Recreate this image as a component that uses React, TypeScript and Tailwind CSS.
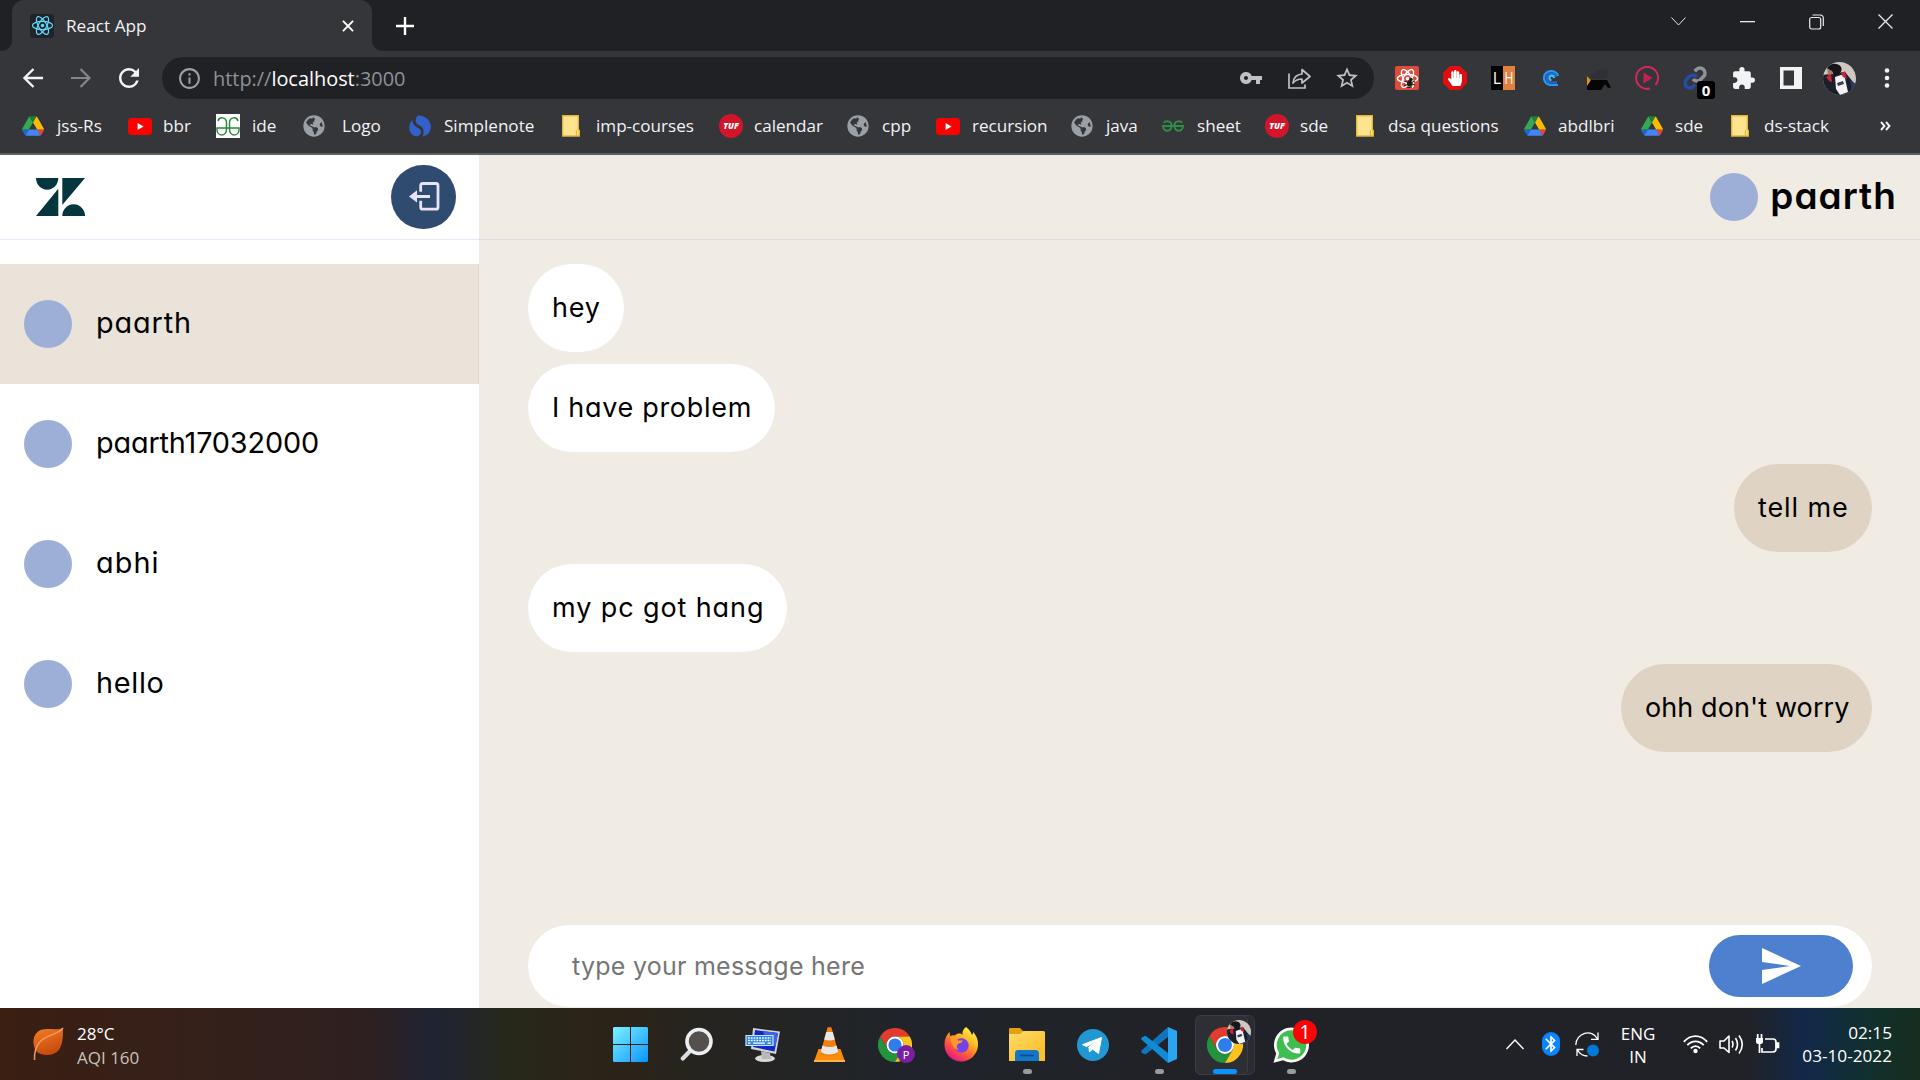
import React from 'react';
import {
  MdVpnKey,
  MdStarBorder,
  MdExtension,
  MdInfoOutline,
  MdRefresh,
  MdBluetooth,
} from 'react-icons/md';
import { FaGlobeAmericas, FaHandPaper } from 'react-icons/fa';

/* ---------- shared glyphs ---------- */

function Atom({ size, color, width = 1.3 }: { size: number; color: string; width?: number }) {
  return (
    <svg width={size} height={size} viewBox="0 0 24 24" fill="none" stroke={color} strokeWidth={width}>
      <ellipse cx="12" cy="12" rx="10.5" ry="4.2" />
      <ellipse cx="12" cy="12" rx="10.5" ry="4.2" transform="rotate(60 12 12)" />
      <ellipse cx="12" cy="12" rx="10.5" ry="4.2" transform="rotate(120 12 12)" />
      <circle cx="12" cy="12" r="1.8" fill={color} stroke="none" />
    </svg>
  );
}

function DriveIcon() {
  return (
    <svg width="22" height="20" viewBox="0 0 87.3 78">
      <path d="m6.6 66.85 3.85 6.65c.8 1.4 1.95 2.5 3.3 3.3l13.75-23.8h-27.5c0 1.55.4 3.1 1.2 4.5z" fill="#1967d2" />
      <path d="m43.65 25-13.75-23.8c-1.35.8-2.5 1.9-3.3 3.3l-25.4 44a9.06 9.06 0 0 0 -1.2 4.5h27.5z" fill="#34a853" />
      <path d="m73.55 76.8c1.35-.8 2.5-1.9 3.3-3.3l1.6-2.75 7.65-13.25c.8-1.4 1.2-2.95 1.2-4.5h-27.5l5.85 11.5z" fill="#ea4335" />
      <path d="m43.65 25 13.75-23.8c-1.35-.8-2.9-1.2-4.5-1.2h-18.5c-1.6 0-3.15.45-4.5 1.2z" fill="#188038" />
      <path d="m59.8 53h-32.3l-13.75 23.8c1.35.8 2.9 1.2 4.5 1.2h50.8c1.6 0 3.15-.45 4.5-1.2z" fill="#4285f4" />
      <path d="m73.4 26.5-12.7-22c-.8-1.4-1.95-2.5-3.3-3.3l-13.75 23.8 16.15 28h27.45c0-1.55-.4-3.1-1.2-4.5z" fill="#fbbc04" />
    </svg>
  );
}

function YoutubeIcon() {
  return (
    <svg width="24" height="17" viewBox="0 0 24 17">
      <rect width="24" height="17" rx="4" fill="#f00" />
      <path d="M9.6 5v7l6-3.5z" fill="#fff" />
    </svg>
  );
}

function GfgMark({ color, width }: { color: string; width: number }) {
  return (
    <svg width="24" height="24" viewBox="0 0 24 24" fill="none" stroke={color} strokeWidth={width}>
      <path d="M2 7C3 2.500 10.500 2.500 10.500 9v6c0 3.500-2 6-5 6s-4.500-3-4.500-5.500V14H23v1.500c0 2.500-1.500 5.500-4.500 5.500s-5-2.500-5-6V9C13.500 2.500 21 2.500 22 7" />
    </svg>
  );
}

function SmallGfg() {
  return (
    <svg width="22" height="12" viewBox="0 0 22 12" fill="none" stroke="#2f8d46" strokeWidth="1.9">
      <path d="M2 3C3 .500 9.500.500 9.500 5 9.500 13 1 12 1 6h20c0 6-8.500 7-8.500-1C12.500.500 19 .500 20 3" />
    </svg>
  );
}

function SimplenoteIcon() {
  return (
    <svg width="22" height="22" viewBox="0 0 22 22" fill="#3361cc">
      <path d="M9 .500C5.500 4 6 8.500 10 10 14.500 12 16 16 13.500 21.500 20.500 20.500 23.500 13 21 8 19 3 14.500.500 9 .500Z" />
      <path d="M3.500 5C-1 9.500-1 17 4.500 20.500 8.500 22.500 12 20 12 17 12 11.500 3 13 3.500 5Z" />
    </svg>
  );
}

function FolderMark() {
  return (
    <svg width="18" height="22" viewBox="0 0 18 22">
      <path d="M.7.700h15.600V14.500l1 1V21H.700Z" fill="#ffe38f" stroke="#e3b73c" strokeWidth="1.400" />
      <path d="M14.500 21v-6" stroke="#e3b73c" strokeWidth="1.300" />
    </svg>
  );
}

function TufIcon() {
  return (
    <span className="flex h-6 w-6 items-center justify-center rounded-full bg-[#d3152c] text-[8.5px] font-extrabold italic leading-none text-white">
      TUF
    </span>
  );
}

const Globe = () => <FaGlobeAmericas size={22} color="#9aa0a6" />;

function ChromeIcon({ size }: { size: number }) {
  return (
    <svg width={size} height={size} viewBox="0 0 48 48">
      <path d="M24 12H44.800A24 24 0 0 0 3.200 12L13.600 30A12 12 0 0 1 24 12Z" fill="#e33b2e" />
      <path d="M3.200 12A24 24 0 0 0 24 48L34.400 30A12 12 0 0 1 13.600 30Z" fill="#23933f" />
      <path d="M44.800 12A24 24 0 0 1 24 48L34.400 30A12 12 0 0 0 24 12Z" fill="#fcc31e" />
      <circle cx="24" cy="24" r="12" fill="#fff" />
      <circle cx="24" cy="24" r="9.300" fill="#2f7ded" />
    </svg>
  );
}

function Avatar({ size, id }: { size: number; id: string }) {
  return (
    <svg width={size} height={size} viewBox="0 0 33 33">
      <clipPath id={id}>
        <circle cx="16.500" cy="16.500" r="16.500" />
      </clipPath>
      <g clipPath={`url(#${id})`}>
        <path d="M0 0h33v33H0z" fill="#cfc8c0" />
        <path d="M0 13 6 12 13 11 22 10 30 20 33 26V33H0Z" fill="#1b1f2b" />
        <path d="M12 15 21 12 25 30 17 33 13 27Z" fill="#f2f2f4" />
        <path d="M3 15 8 12 9 20 6 19Z" fill="#c8243c" />
        <path d="M18 12 22 9 24 17 20 15Z" fill="#c8243c" />
        <path d="M14 21 20 19 21 22 15 24Z" fill="#3a3f4e" />
        <path d="M27 18 33 22V33H29Z" fill="#253a63" />
        <path d="M4 6 10 7 10 12 5 13Z" fill="#a9795d" />
        <path d="M4 6C6 1 15 0 18 5 20 8 17 13 12 14L9 9Z" fill="#15151a" />
      </g>
    </svg>
  );
}

/* ---------- browser chrome ---------- */

function TabStrip() {
  return (
    <div className="flex h-[51px] bg-[#202124]">
      <div className="flex w-3 flex-col justify-end bg-[#35363a]">
        <div className="h-full rounded-br-[10px] bg-[#202124]" />
      </div>
      <div className="bg-[#202124]">
        <div className="flex h-[51px] w-[360px] items-center rounded-t-[12px] bg-[#35363a] pl-[18px] pr-[18px]">
          <span className="flex h-6 w-6 items-center justify-center rounded-[3px] bg-[#20232a]">
            <Atom size={23} color="#61dafb" />
          </span>
          <span className="ml-3 flex-1 text-[17.2px] leading-6 text-[#f1f3f4]">React App</span>
          <svg width="12" height="12" viewBox="0 0 13 13" stroke="#fff" strokeWidth="2.1">
            <path d="M1 1 12 12M12 1 1 12" />
          </svg>
        </div>
      </div>
      <div className="w-3 bg-[#35363a]">
        <div className="h-full rounded-bl-[10px] bg-[#202124]" />
      </div>
      <svg className="ml-3 mt-[17px]" width="18" height="18" viewBox="0 0 18 18" stroke="#fff" strokeWidth="2.400">
        <path d="M9 0V18M0 9H18" />
      </svg>
      <div className="flex flex-1 items-center justify-end gap-[54px] pb-[8px] pr-[27px]">
        <svg width="15" height="9" viewBox="0 0 15 9" fill="none" stroke="#e8eaed" strokeWidth="1">
          <path d="M.500.500 7.500 8 14.500.500" />
        </svg>
        <svg width="15" height="2" viewBox="0 0 15 2">
          <path d="M0 0h15v1.300H0z" fill="#e8eaed" />
        </svg>
        <svg width="15" height="16" viewBox="0 0 15 16" fill="none" stroke="#e8eaed" strokeWidth="1.200">
          <rect x=".700" y="3.500" width="11" height="11.500" rx="2" />
          <path d="M3.500 1H11Q14.300 1 14.300 4.300V12" />
        </svg>
        <svg width="15" height="15" viewBox="0 0 15 15" stroke="#e8eaed" strokeWidth="1.300">
          <path d="M.500.500 14.500 14.500M14.500.500.500 14.500" />
        </svg>
      </div>
    </div>
  );
}

function Cell({ children }: { children: React.ReactNode }) {
  return <div className="flex h-[42px] w-12 shrink-0 items-center justify-center">{children}</div>;
}

function LinkExtension() {
  return (
    <div className="relative">
      <svg width="24" height="24" viewBox="0 0 24 24" fill="none" strokeWidth="3.600">
        <path stroke="#8f9296" d="M10 13a5 5 0 0 0 7.540.540l3-3a5 5 0 0 0-7.070-7.070l-1.720 1.710" />
        <path stroke="#274ba6" d="M14 11a5 5 0 0 0-7.540-.540l-3 3a5 5 0 0 0 7.070 7.070l1.710-1.710" />
      </svg>
      <span className="absolute -bottom-[9px] -right-[8px] flex h-[18px] w-[18px] items-center justify-center rounded-[3px] bg-black text-[15px] font-bold leading-none text-white">
        0
      </span>
    </div>
  );
}

function Toolbar() {
  return (
    <div className="flex h-[54px] items-center bg-[#35363a] pl-[9px] pr-[9px]">
      <Cell>
        <svg width="20" height="20" viewBox="0 0 20 20" fill="none" stroke="#f1f3f4" strokeWidth="2.300">
          <path d="M20 10H1.500M10.500 1 1.500 10l9 9" />
        </svg>
      </Cell>
      <Cell>
        <svg width="20" height="20" viewBox="0 0 20 20" fill="none" stroke="#85868a" strokeWidth="2.200">
          <path d="M0 10H18.500M9.500 1l9 9-9 9" />
        </svg>
      </Cell>
      <Cell>
        <MdRefresh size={30} color="#f1f3f4" />
      </Cell>
      <div className="ml-[9px] mr-[9px] flex h-[42px] flex-1 items-center rounded-full bg-[#202124] pl-[15px] pr-[3px]">
        <MdInfoOutline size={25} color="#9aa0a6" />
        <span className="ml-[11px] mt-px flex-1 text-[19.9px] leading-6 text-[#8d9196]">
          http://<span className="text-white">localhost</span>:3000
        </span>
        <Cell>
          <MdVpnKey size={24} color="#bdc1c6" />
        </Cell>
        <Cell>
          <svg width="23" height="21" viewBox="0 0 23 21" fill="none" stroke="#bdc1c6" strokeWidth="1.700">
            <path d="M1 5.500V20H17V16.500" />
            <path d="M5 15C5.500 9.500 8.500 6.500 14 6V1.500L22 8.500 14 15V11C10 11 7.500 12 5 15Z" strokeLinejoin="round" />
          </svg>
        </Cell>
        <Cell>
          <MdStarBorder size={26} color="#bdc1c6" />
        </Cell>
      </div>
      <Cell>
        <span className="relative flex h-6 w-6 items-center justify-center rounded-[2px] bg-[#dd4b39]">
          <Atom size={23} color="#fff" width={1.5} />
          <svg className="absolute bottom-[2px] right-[4px]" width="11" height="12" viewBox="0 0 11 12">
            <ellipse cx="5.500" cy="7.500" rx="2.400" ry="3.300" fill="#1b1b1b" />
            <circle cx="7" cy="3.500" r="1.700" fill="#1b1b1b" />
            <path d="M0 5 11 9M0 10 11 5M3 12 8 11" stroke="#1b1b1b" strokeWidth="1.100" />
          </svg>
        </span>
      </Cell>
      <Cell>
        <span className="relative flex h-6 w-6 items-center justify-center">
          <svg className="absolute inset-0" width="24" height="24" viewBox="0 0 24 24">
            <path d="M7 0H17L24 7V17L17 24H7L0 17V7Z" fill="#e40d0d" />
          </svg>
          <FaHandPaper className="relative" size={16} color="#fff" />
        </span>
      </Cell>
      <Cell>
        <span className="flex h-6 w-6 text-[16px] leading-6 text-white">
          <span className="w-3 bg-black text-center">L</span>
          <span className="w-3 bg-[#e0813f] text-center">
            <span className="inline-block origin-center scale-x-75">H</span>
          </span>
        </span>
      </Cell>
      <Cell>
        <svg width="16" height="16" viewBox="0 0 16 16" fill="none" strokeWidth="2.2">
          <path d="M15 6C13.500-1 1-.500 1 8c0 4.500 3.500 7 7 7h7" stroke="#1f9df2" />
          <path d="M13 7C11.500 1.500 3.700 2.500 3.700 8c0 3 2.300 4.500 4.300 4.500h6" stroke="#2a62e8" />
          <path d="M11 8C10.500 4.500 6.400 5 6.400 8c0 1.500 1 2 2 2" stroke="#35c5e8" />
        </svg>
      </Cell>
      <Cell>
        <svg width="24" height="24" viewBox="0 0 24 24">
          <path d="M0 10 4 14.500 0 21Z" fill="#f08a1c" />
          <path d="M3 10 10 5 20 3 22 8 18 13H5Z" fill="#303033" />
          <path d="M4 14 20 14 24 21.500 21 22 18 18 14 24H0V20Z" fill="#050505" />
        </svg>
      </Cell>
      <Cell>
        <svg width="24" height="24" viewBox="0 0 24 24">
          <path d="M15 22.500A11 11 0 1 1 20.500 19" fill="none" stroke="#d92560" strokeWidth="1.900" />
          <path d="M8.500 6.500v11L17.500 12Z" fill="#c2224f" />
        </svg>
      </Cell>
      <Cell>
        <LinkExtension />
      </Cell>
      <Cell>
        <MdExtension size={25} color="#f1f3f4" />
      </Cell>
      <Cell>
        <svg width="22" height="22" viewBox="0 0 22 22">
          <path d="M0 0H22V22H0ZM3.500 3.500V18.500H14V3.500Z" fill="#f1f3f4" fillRule="evenodd" />
        </svg>
      </Cell>
      <Cell>
        <Avatar size={33} id="profile" />
      </Cell>
      <Cell>
        <svg width="6" height="20" viewBox="0 0 6 20" fill="#f1f3f4">
          <circle cx="3" cy="2.500" r="2.300" />
          <circle cx="3" cy="10" r="2.300" />
          <circle cx="3" cy="17.500" r="2.300" />
        </svg>
      </Cell>
    </div>
  );
}

const bookmarks: { icon: React.ReactNode; label: string; item: string; box: string }[] = [
  { icon: <DriveIcon />, label: 'jss-Rs', item: 'w-[106px]', box: 'w-[35px]' },
  { icon: <YoutubeIcon />, label: 'bbr', item: 'w-[88px]', box: 'w-[35px]' },
  {
    icon: (
      <span className="h-6 w-6 bg-white">
        <GfgMark color="#2a8a3c" width={1.5} />
      </span>
    ),
    label: 'ide',
    item: 'w-[87px]',
    box: 'w-[36px]',
  },
  { icon: <Globe />, label: 'Logo', item: 'w-[106px]', box: 'w-[39px]' },
  { icon: <SimplenoteIcon />, label: 'Simplenote', item: 'w-[153px]', box: 'w-[35px]' },
  { icon: <FolderMark />, label: 'imp-courses', item: 'w-[157px]', box: 'w-[34px]' },
  { icon: <TufIcon />, label: 'calendar', item: 'w-[128px]', box: 'w-[35px]' },
  { icon: <Globe />, label: 'cpp', item: 'w-[89px]', box: 'w-[35px]' },
  { icon: <YoutubeIcon />, label: 'recursion', item: 'w-[135px]', box: 'w-[36px]' },
  { icon: <Globe />, label: 'java', item: 'w-[91px]', box: 'w-[35px]' },
  { icon: <SmallGfg />, label: 'sheet', item: 'w-[103px]', box: 'w-[35px]' },
  { icon: <TufIcon />, label: 'sde', item: 'w-[91px]', box: 'w-[35px]' },
  { icon: <FolderMark />, label: 'dsa questions', item: 'w-[168px]', box: 'w-[32px]' },
  { icon: <DriveIcon />, label: 'abdlbri', item: 'w-[117px]', box: 'w-[34px]' },
  { icon: <DriveIcon />, label: 'sde', item: 'w-[90px]', box: 'w-[34px]' },
  { icon: <FolderMark />, label: 'ds-stack', item: 'w-[149px]', box: 'w-[33px]' },
];

function BookmarksBar() {
  return (
    <div className="flex h-[50px] items-center border-b-2 border-[#5f6063] bg-[#35363a] pb-[6px] pl-[22px] text-[17.1px] leading-6 text-[#f1f3f4]">
      {bookmarks.map((b, i) => (
        <div key={i} className={`flex shrink-0 items-center whitespace-nowrap ${b.item}`}>
          <span className={`flex shrink-0 items-center ${b.box}`}>{b.icon}</span>
          <span>{b.label}</span>
        </div>
      ))}
      <svg width="11" height="10" viewBox="0 0 11 10" fill="none" stroke="#f1f3f4" strokeWidth="1.900">
        <path d="M1 1 4.500 5 1 9M6 1 9.500 5 6 9" />
      </svg>
    </div>
  );
}

/* ---------- chat application ---------- */

const contacts = [
  { name: 'paarth', tracking: 'tracking-[0.9px]', active: true },
  { name: 'paarth17032000', tracking: 'tracking-[-0.15px]', active: false },
  { name: 'abhi', tracking: 'tracking-[1.1px]', active: false },
  { name: 'hello', tracking: 'tracking-[0.7px]', active: false },
];

const messages = [
  { text: 'hey', mine: false, size: 'w-24', tracking: 'tracking-[0.8px]' },
  { text: 'I have problem', mine: false, size: 'w-[247px]', tracking: 'tracking-[0.7px]' },
  { text: 'tell me', mine: true, size: 'w-[138px]', tracking: 'tracking-[0.9px]' },
  { text: 'my pc got hang', mine: false, size: 'w-[259px]', tracking: 'tracking-[0.9px]' },
  { text: "ohh don't worry", mine: true, size: 'w-[251px]', tracking: 'tracking-[0.1px]' },
];

function Sidebar() {
  return (
    <aside className="flex w-[479px] shrink-0 flex-col bg-white">
      <header className="flex h-[85px] items-center justify-between border-b border-[#e9e6f8] pb-px pl-[36px] pr-[23px]">
        <svg width="49" height="38" viewBox="0 0 49 38" fill="#03363d">
          <path d="M0 0H22.300A11.150 11.700 0 0 1 0 0Z" />
          <path d="M22.300 10.700V38H0Z" />
          <path d="M26.300 0H49L26.300 27Z" />
          <path d="M26.300 38A11.350 11.700 0 0 1 49 38Z" />
        </svg>
        <button className="flex h-[64px] w-[65px] items-center justify-center rounded-full bg-[#304b70] pl-[2px]">
          <svg width="31" height="29" viewBox="0 0 31 29">
            <path d="M11.700 9.700V3.500Q11.700 1.500 13.700 1.500H27Q29 1.500 29 3.500V25.200Q29 27.200 27 27.200H13.700Q11.700 27.200 11.700 25.200V18.700" fill="none" stroke="#e8e2fa" strokeWidth="2.800" />
            <path d="M0 14.400 8 8.300V13H21V16H8V20.500Z" fill="#e8e2fa" />
          </svg>
        </button>
      </header>
      <nav className="pt-6">
        {contacts.map((c) => (
          <div
            key={c.name}
            className={`flex h-[120px] items-center gap-6 pl-6 ${c.active ? 'border-r border-[#dfd9d0] bg-[#e9e3d9]' : ''}`}
          >
            <span className="h-12 w-12 rounded-full bg-[#9daed7]" />
            <span className={`-mt-[2px] text-[28.8px] text-black ${c.tracking}`}>{c.name}</span>
          </div>
        ))}
      </nav>
    </aside>
  );
}

function Conversation() {
  return (
    <main className="flex flex-1 flex-col bg-[#f0ebe3]">
      <header className="flex h-[85px] shrink-0 items-center justify-end border-b border-[#e0dce3] pb-px pr-[23px]">
        <span className="h-12 w-12 rounded-full bg-[#9daed7]" />
        <span className="-mt-[3px] ml-[12px] text-[37px] font-semibold leading-none tracking-[1.05px] text-black">paarth</span>
      </header>
      <div className="flex flex-1 flex-col gap-3 pl-[49px] pr-12 pt-6">
        {messages.map((m) => (
          <div
            key={m.text}
            className={`flex h-[88px] items-center whitespace-nowrap rounded-full pl-6 text-[27px] font-[390] text-black ${m.size} ${m.tracking} ${
              m.mine ? 'self-end bg-[#dfd3c3]' : 'bg-white'
            }`}
          >
            {m.text}
          </div>
        ))}
      </div>
      <div className="mb-px ml-[49px] mr-12 flex h-[82px] shrink-0 items-center rounded-full bg-white pl-[44px] pr-[19px]">
        <span className="mt-px flex-1 text-[25px] font-[390] tracking-[0.25px] text-[#757575]">type your message here</span>
        <button className="flex h-[62px] w-[144px] items-center justify-center rounded-full bg-[#4e80d0]">
          <svg width="39" height="36" viewBox="0 0 39 36">
            <path d="M0 0 39 18 0 36V22L28 18 0 14Z" fill="#fff" />
          </svg>
        </button>
      </div>
    </main>
  );
}

/* ---------- taskbar ---------- */

function TaskCell({ children, running }: { children: React.ReactNode; running?: boolean }) {
  return (
    <div className="relative flex h-[72px] w-[66px] shrink-0 items-center justify-center pt-px">
      {children}
      {running && <span className="absolute bottom-[6px] h-[5px] w-[9px] rounded-full bg-[#9a9a9a]" />}
    </div>
  );
}

function WindowsIcon() {
  return (
    <svg className="mr-[2px]" width="35" height="35" viewBox="0 0 35 35">
      <defs>
        <linearGradient id="win" x1="0" y1="0" x2="35" y2="35" gradientUnits="userSpaceOnUse">
          <stop stopColor="#7cf3ff" />
          <stop offset="1" stopColor="#0b93ff" />
        </linearGradient>
      </defs>
      <path d="M1 0H17V17H0V1ZM18 0H34L35 1V17H18ZM0 18H17V35H1L0 34ZM18 18H35V34L34 35H18Z" fill="url(#win)" />
    </svg>
  );
}

function SearchIcon() {
  return (
    <svg width="34" height="35" viewBox="0 0 34 35" fill="none">
      <path d="M10 24 2.800 31.500" stroke="#d8dde0" strokeWidth="4.200" strokeLinecap="round" />
      <circle cx="19" cy="14.500" r="12" fill="#55504d" stroke="#eceff0" strokeWidth="3.600" />
    </svg>
  );
}

function KeyboardPcIcon() {
  return (
    <svg width="36" height="36" viewBox="0 0 36 36">
      <ellipse cx="20" cy="31.500" rx="10" ry="3.500" fill="#d9d9d9" />
      <path d="M16 24 25 26 26 32H17Z" fill="#b9b9b9" />
      <path d="M8 1 35 4.500 31 27 6 22Z" fill="#d4d4d6" />
      <path d="M10 3 33 6 29.500 24.500 8 20Z" fill="#1227c4" />
      <path d="M18 4 33 6 30.500 20C26 16 20 14 18 4Z" fill="#3c62e6" />
      <path d="M1 8.500H28V18.500H1Z" fill="#2a86dc" stroke="#cfe3f7" strokeWidth="1.200" />
      <path d="M3 11H26M3 13.500H26" stroke="#fff" strokeWidth="1.300" strokeDasharray="1.800 1" />
      <path d="M3 16.200H5.500M8 16.200H20M22.500 16.200H26" stroke="#fff" strokeWidth="1.300" />
    </svg>
  );
}

function VlcIcon() {
  return (
    <svg width="31" height="35" viewBox="0 0 31 35">
      <path d="M4.500 22H26.500L31 34.500H0Z" fill="#f88c0c" />
      <path d="M0 33H31V35H0Z" fill="#ffb347" />
      <path d="M13.500.500Q15.500-.500 17.500.500L24.500 26Q15.500 32 6.500 26Z" fill="#f37e0a" />
      <path d="M12.300 5 18.700 5 20.800 12.500Q15.500 14.500 10.200 12.500Z" fill="#e8e8e8" />
      <path d="M8.500 18.500Q15.500 21.500 22.500 18.500L24.300 25Q15.500 30 6.700 25Z" fill="#e8e8e8" />
    </svg>
  );
}

function FirefoxIcon() {
  return (
    <svg width="35" height="35" viewBox="0 0 35 35">
      <defs>
        <linearGradient id="fox" x1="28" y1="3" x2="8" y2="33" gradientUnits="userSpaceOnUse">
          <stop stopColor="#fff04a" />
          <stop offset=".350" stopColor="#ffae1f" />
          <stop offset=".650" stopColor="#ff5a3c" />
          <stop offset="1" stopColor="#e31587" />
        </linearGradient>
      </defs>
      <path d="M22 0C25 2 27 5 28 8 29 7 29 6 29 5 33 9 34.500 14 34 19 33 28 26 34.500 17.500 34.500 8 34.500.500 27 .500 18 .500 12 2.500 8 5.500 5L6 9C8 8 9.500 8 11 8.500 13 6 17 6 18.500 8 18 5 19 2 22 0Z" fill="url(#fox)" />
      <circle cx="17.500" cy="18.500" r="7.200" fill="#7542e5" />
      <path d="M6 11C9 9 12 11 14 13.500H19C18 16 15 16 13.500 17.500 12 19.500 13 22 15 23 10 23 8 18 6 11Z" fill="#ff9a2a" />
    </svg>
  );
}

function ExplorerIcon() {
  return (
    <svg width="36" height="33" viewBox="0 0 36 33">
      <defs>
        <linearGradient id="fold" x1="0" y1="4" x2="20" y2="33" gradientUnits="userSpaceOnUse">
          <stop stopColor="#ffdc6b" />
          <stop offset="1" stopColor="#fbc02b" />
        </linearGradient>
      </defs>
      <path d="M0 1Q0 0 1.500 0H11L15 4V9H0Z" fill="#e5a20d" />
      <path d="M0 6H11L14.500 3H34.500Q36 3 36 4.500V33H0Z" fill="url(#fold)" />
      <path d="M6 33V25.500Q6 22 9.500 22H26.500Q30 22 30 25.500V33Z" fill="#1277c8" />
      <path d="M11 27.500H25" stroke="#0a4c8c" strokeWidth="1.600" />
    </svg>
  );
}

function TelegramIcon() {
  return (
    <svg width="32" height="32" viewBox="0 0 32 32">
      <circle cx="16" cy="16" r="16" fill="#2197d3" />
      <path d="M5.500 15.700 24.500 8.500 21.500 24.500 15.500 20 12.500 23 11.800 18 20.500 11.500 9.500 17.500Z" fill="#fff" stroke="#fff" strokeLinejoin="round" />
    </svg>
  );
}

function CodeIcon() {
  return (
    <svg width="36" height="36" viewBox="0 0 36 36">
      <path d="M27 0 27 10 4.500 27.500 1 26Q-.500 24.500 1 23Z" fill="#0f76bd" />
      <path d="M27 36 27 26 4.500 8.700 1 10.200Q-.500 11.700 1 13Z" fill="#128bd6" />
      <path d="M27 0 36 4V32L27 36Z" fill="#2aa5f0" />
    </svg>
  );
}

function WhatsappIcon() {
  return (
    <svg width="36" height="36" viewBox="0 0 36 36">
      <path d="M18.500.500A17.500 17.500 0 1 1 10 33.300L.500 35.800 3.200 26.500A17.500 17.500 0 0 1 18.500.500Z" fill="#fff" />
      <path d="M18.500 3.300A14.700 14.700 0 1 1 10.500 30.300L4.500 31.900 6.200 26A14.700 14.700 0 0 1 18.500 3.300Z" fill="#3dbe4f" />
      <path transform="translate(7.300 6.600) scale(.950)" fill="#fff" d="M6.620 10.790c1.440 2.830 3.760 5.140 6.590 6.590l2.200-2.200c.270-.270.670-.360 1.020-.240 1.120.370 2.330.570 3.570.570.550 0 1 .450 1 1V20c0 .550-.450 1-1 1-9.390 0-17-7.610-17-17 0-.550.450-1 1-1h3.500c.550 0 1 .450 1 1 0 1.250.200 2.450.570 3.570.110.350.030.740-.250 1.020l-2.200 2.200z" />
    </svg>
  );
}

function Tray() {
  return (
    <div className="flex flex-1 items-center justify-end pr-[28px] text-[17px] leading-6 text-white">
      <div className="flex w-9 justify-center">
        <svg width="18" height="11" viewBox="0 0 18 11" fill="none" stroke="#fff" strokeWidth="1.400">
          <path d="M.500 10 9 1 17.500 10" />
        </svg>
      </div>
      <div className="flex w-9 justify-center">
        <span className="flex h-6 w-[18px] items-center justify-center rounded-full bg-[#0a84ff]">
          <MdBluetooth size={20} color="#fff" className="shrink-0" />
        </span>
      </div>
      <div className="flex w-9 justify-center">
        <svg width="25" height="25" viewBox="0 0 25 25" fill="none" stroke="#fff" strokeWidth="1.300">
          <path d="M.800 13C1 1 17-4 22.500 7M23 .500V7.300H16" />
          <path d="M2 24V17.500H8.500M2.500 18C5 22.500 8 24 12.500 24" />
          <circle cx="18" cy="18.500" r="6" fill="#0078d7" stroke="none" />
        </svg>
      </div>
      <div className="w-[66px] pt-[2px] text-center">
        <div>ENG</div>
        <div className="-mt-px">IN</div>
      </div>
      <div className="ml-[6px] flex w-9 justify-center">
        <svg width="25" height="19" viewBox="0 0 25 19" fill="none" stroke="#fff" strokeWidth="1.800">
          <path d="M.800 6.800C7.500-.800 17.500-.800 24.200 6.800M4.300 10.200C9 5 16 5 20.700 10.200M7.800 13.300C10.500 10.300 14.500 10.300 17.200 13.300" />
          <circle cx="12.500" cy="16" r="2.200" fill="#fff" stroke="none" />
        </svg>
      </div>
      <div className="flex w-9 justify-center">
        <svg width="25" height="21" viewBox="0 0 25 21" fill="none" stroke="#fff" strokeWidth="1.600">
          <path d="M1 7H5L10 2V18.500L5 14H1Z" strokeLinejoin="round" />
          <path d="M13 7Q15 10.300 13 13.500M16.500 4Q20.500 10.300 16.500 16.500M20 1.500Q26.500 10.300 20 19.500" />
        </svg>
      </div>
      <div className="flex w-9 justify-center">
        <svg width="25" height="20" viewBox="0 0 25 20" fill="none" stroke="#fff" strokeWidth="1.700">
          <path d="M10 5H18Q21 5 21 8V14.500Q21 18 18 18H7V14" />
          <path d="M21.500 9H23.500V13.500H21.500Z" fill="#fff" />
          <path d="M1 4H8V8Q8 10 4.500 10 1 10 1 8Z" fill="#fff" stroke="none" />
          <path d="M2.700 0V5M6.500 0V5M4.500 9V19" />
        </svg>
      </div>
      <div className="w-[107px] text-right text-[17.2px]">
        <div>02:15</div>
        <div className="-mt-px">03-10-2022</div>
      </div>
    </div>
  );
}

function Taskbar() {
  return (
    <footer className="flex h-[72px] shrink-0 bg-[linear-gradient(90deg,#3a1f12_0px,#35201a_200px,#2e2020_370px,#1f2433_435px,#27281a_510px,#2c2318_600px,#26241f_700px,#20242a_900px,#202227_1200px,#202227_1750px,#12284a_1805px,#11302f_1865px,#162d1e_1920px)]">
      <div className="flex w-[598px] items-center pl-[32px] text-[17px] leading-6">
        <svg width="32" height="34" viewBox="0 0 32 37" preserveAspectRatio="none">
          <defs>
            <linearGradient id="leaf" x1="8" y1="2" x2="20" y2="32" gradientUnits="userSpaceOnUse">
              <stop stopColor="#f07a22" />
              <stop offset="1" stopColor="#c2440c" />
            </linearGradient>
          </defs>
          <path d="M31 1C31 10 31 18 27 25 22 32 9 32 4 26 0 19 0 7 9 3 16 1 25 4 31 1Z" fill="url(#leaf)" />
          <path d="M2.500 36C2 18 10 12 21 8 26 6 29 4 31 1" fill="none" stroke="#f29a63" strokeWidth="1.500" />
        </svg>
        <div className="ml-[13px] pt-[3px]">
          <div className="text-white">28°C</div>
          <div className="text-[#c9c2bf]">AQI 160</div>
        </div>
      </div>
      <TaskCell><WindowsIcon /></TaskCell>
      <TaskCell><SearchIcon /></TaskCell>
      <TaskCell><KeyboardPcIcon /></TaskCell>
      <TaskCell><VlcIcon /></TaskCell>
      <TaskCell>
        <ChromeIcon size={34} />
        <span className="absolute bottom-[17px] right-[13px] flex h-[18px] w-[18px] items-center justify-center rounded-full bg-[#7b1fa2] text-[11px] leading-none text-white">
          P
        </span>
      </TaskCell>
      <TaskCell><FirefoxIcon /></TaskCell>
      <TaskCell running><ExplorerIcon /></TaskCell>
      <TaskCell><TelegramIcon /></TaskCell>
      <TaskCell running><CodeIcon /></TaskCell>
      <TaskCell>
        <span className="absolute left-[10px] top-[7px] h-[60px] w-[53px] rounded-[6px] border border-[#36383d] bg-[#2a2c31]" />
        <span className="absolute left-[3px] top-[7px] h-[60px] w-[53px] rounded-[6px] border border-[#3c3e43] bg-[#2d2f34]" />
        <span className="relative">
          <ChromeIcon size={36} />
        </span>
        <span className="absolute right-[7px] top-[12px]">
          <Avatar size={24} id="window-profile" />
        </span>
        <span className="absolute bottom-[6px] left-[21px] h-[5px] w-6 rounded-full bg-[#0a93ff]" />
      </TaskCell>
      <TaskCell running>
        <WhatsappIcon />
        <span className="absolute right-[7px] top-[12px] flex h-6 w-6 items-center justify-center rounded-full bg-[#fa0505] text-[20px] leading-none text-white">
          1
        </span>
      </TaskCell>
      <Tray />
    </footer>
  );
}

export default function App() {
  return (
    <div className="flex h-[1080px] w-[1920px] flex-col overflow-hidden bg-[#35363a] font-['Open_Sans','Noto_Sans',sans-serif]">
      <TabStrip />
      <Toolbar />
      <BookmarksBar />
      <div className="flex min-h-0 flex-1 font-['Inter',sans-serif] [font-feature-settings:'cv11']">
        <Sidebar />
        <Conversation />
      </div>
      <Taskbar />
    </div>
  );
}
